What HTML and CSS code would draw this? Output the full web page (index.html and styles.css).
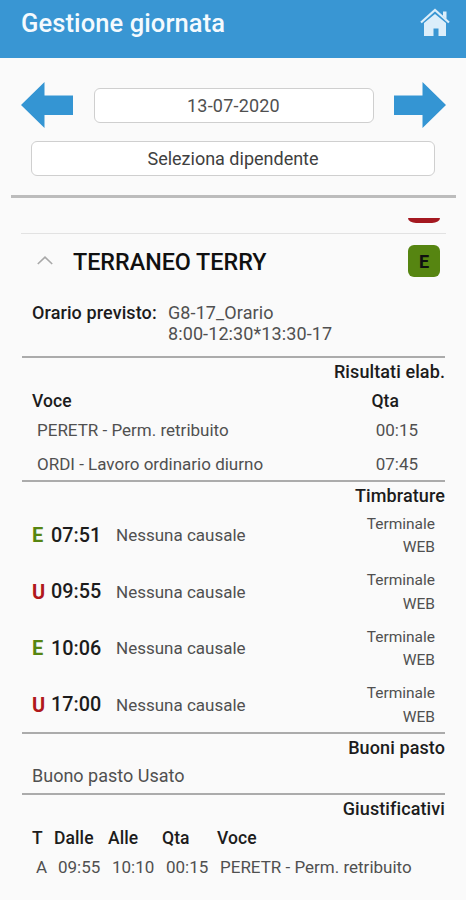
FILE: index.html
```html
<!DOCTYPE html>
<html lang="it">

<head>
  <meta charset="UTF-8">
  <meta name="viewport" content="width=device-width, initial-scale=1.0">
  <title>Gestione giornata</title>
  <link rel="stylesheet" href="styles.css">
</head>

<body>
  <header class="header">
    <h1 class="title">Gestione giornata</h1>
    <svg class="home" viewBox="0 0 32 29" width="32" height="29">
      <path class="home-body" d="M5 15 L16 6 L27 15 V28 H19.5 V20.5 H14.5 V28 H5 Z" />
      <path class="home-roof" d="M2 14.5 L16 2 L30 14.5" />
      <path class="home-body" d="M24 3.5 H27.5 V11 L24 8 Z" />
    </svg>
  </header>

  <div class="day-nav">
    <svg class="arrow" viewBox="0 0 52 46" width="52" height="46">
      <path d="M0 23 L23.5 0 V13.5 H52 V33 H23.5 V46 Z" />
    </svg>
    <div class="box date">13-07-2020</div>
    <svg class="arrow" viewBox="0 0 52 46" width="52" height="46">
      <path d="M52 23 L28.5 0 V13.5 H0 V33 H28.5 V46 Z" />
    </svg>
  </div>
  <div class="box employee">Seleziona dipendente</div>

  <main class="list">
    <div class="previous">
      <span class="badge-cut"></span>
    </div>
    <div class="person">
      <svg class="chevron" viewBox="0 0 16 9" width="16" height="9">
        <path d="M0.8 8 L8 1.2 L15.2 8" />
      </svg>
      <h2 class="name">TERRANEO TERRY</h2>
      <span class="badge">E</span>
    </div>

    <section class="schedule">
      <span class="label">Orario previsto:</span>
      <span class="hours">G8-17_Orario<br>8:00-12:30*13:30-17</span>
    </section>

    <section class="results">
      <h3>Risultati elab.</h3>
      <div class="result head"><span>Voce</span><span>Qta</span></div>
      <div class="result"><span>PERETR - Perm. retribuito</span><span>00:15</span></div>
      <div class="result"><span>ORDI - Lavoro ordinario diurno</span><span>07:45</span></div>
    </section>

    <section class="stamps">
      <h3>Timbrature</h3>
      <div class="stamp">
        <span class="dir in">E</span><span class="time">07:51</span>
        <span class="reason">Nessuna causale</span>
        <span class="source">Terminale<br>WEB</span>
      </div>
      <div class="stamp">
        <span class="dir out">U</span><span class="time">09:55</span>
        <span class="reason">Nessuna causale</span>
        <span class="source">Terminale<br>WEB</span>
      </div>
      <div class="stamp">
        <span class="dir in">E</span><span class="time">10:06</span>
        <span class="reason">Nessuna causale</span>
        <span class="source">Terminale<br>WEB</span>
      </div>
      <div class="stamp">
        <span class="dir out">U</span><span class="time">17:00</span>
        <span class="reason">Nessuna causale</span>
        <span class="source">Terminale<br>WEB</span>
      </div>
    </section>

    <section class="meals">
      <h3>Buoni pasto</h3>
      <p class="meal">Buono pasto Usato</p>
    </section>

    <section class="absences">
      <h3>Giustificativi</h3>
      <div class="absence head">
        <span>T</span><span>Dalle</span><span>Alle</span><span>Qta</span><span>Voce</span>
      </div>
      <div class="absence">
        <span>A</span><span>09:55</span><span>10:10</span><span>00:15</span><span>PERETR - Perm. retribuito</span>
      </div>
    </section>
  </main>
</body>

</html>
```
FILE: styles.css
```css
* {
  box-sizing: border-box;
}

body {
  margin: 0;
  height: 900px;
  overflow: hidden;
  background-color: #fafafa;
  color: #505050;
  font-family: Roboto, "Liberation Sans", sans-serif;
  font-size: 18px;
  white-space: nowrap;
}

h1, h2, h3, p {
  margin: 0;
}

.header {
  display: flex;
  justify-content: space-between;
  height: 58px;
  padding: 8px 15px 0 21px;
  background-color: #3996d3;
}

.title {
  color: #f4fafe;
  font-size: 25.5px;
  font-weight: 500;
  line-height: 31px;
  letter-spacing: 0.1px;
}

.home-body {
  fill: #dceefa;
}

.home-roof {
  fill: none;
  stroke: #dceefa;
  stroke-width: 2.2;
}

.day-nav {
  display: flex;
  align-items: center;
  justify-content: space-between;
  height: 46px;
  margin: 24px 20px 0 21px;
}

.arrow {
  fill: #3495d3;
}

.box {
  height: 35px;
  border: 1px solid #cfcfcf;
  border-radius: 6px;
  background-color: #fff;
  line-height: 34px;
  text-align: center;
}

.date {
  width: 280px;
  letter-spacing: 0.2px;
}

.employee {
  margin: 13px 31px 0;
  color: #404040;
}

.list {
  margin: 19px 10px 0 11px;
  padding: 0 10px;
  border-top: 3px solid #bcbcbc;
}

.previous {
  display: flex;
  justify-content: flex-end;
  height: 36px;
  padding: 20px 6px 0 0;
  border-bottom: 1px solid #e2e2e2;
}

.badge-cut {
  width: 32px;
  height: 5px;
  border-radius: 0 0 8px 8px / 0 0 5px 5px;
  background-color: #a41820;
}

.person {
  display: flex;
  align-items: center;
  height: 56px;
  padding: 0 6px 0 16px;
}

.chevron {
  margin-top: -4px;
  fill: none;
  stroke: #a8a8a8;
  stroke-width: 1.6;
}

.name {
  flex: 1;
  padding-left: 20px;
  color: #101010;
  font-size: 23.3px;
  font-weight: 500;
}

.badge {
  width: 32px;
  height: 32px;
  margin-top: -2px;
  border-radius: 6px;
  background-color: #568511;
  color: #101010;
  font-weight: 700;
  line-height: 34px;
  text-align: center;
}

section {
  margin: 0 1px;
  border-bottom: 2px solid #ababab;
}

h3 {
  height: 26px;
  color: #1c1c1c;
  font-size: 18px;
  font-weight: 500;
  line-height: 27px;
  letter-spacing: 0.1px;
  text-align: right;
}

.schedule {
  display: flex;
  height: 68px;
  padding: 12px 0 0 10px;
  line-height: 21px;
  letter-spacing: 0.1px;
}

.schedule .label {
  width: 136px;
  color: #1c1c1c;
  font-weight: 500;
}

.results {
  height: 124px;
}

.result {
  display: flex;
  justify-content: space-between;
  height: 34px;
  padding: 0 27px 0 15px;
  font-size: 17px;
  line-height: 35px;
}

.absence.head,
.result.head {
  color: #1c1c1c;
  font-size: 17.5px;
  font-weight: 500;
  letter-spacing: 0.1px;
}

.result.head {
  height: 29px;
  padding: 0 46px 0 10px;
}

.stamps {
  height: 252px;
}

.stamp {
  display: flex;
  align-items: center;
  height: 56.5px;
  padding: 0 10px;
}

.dir,
.time,
.reason {
  margin-top: -2px;
}

.dir {
  width: 19px;
  font-size: 20px;
  font-weight: 700;
}

.in {
  color: #568511;
}

.out {
  color: #b0181c;
}

.time {
  width: 65px;
  color: #1c1c1c;
  font-size: 19.8px;
  font-weight: 500;
}

.reason {
  flex: 1;
  font-size: 17px;
}

.source {
  font-size: 15.5px;
  line-height: 23.5px;
  text-align: right;
}

.meals {
  height: 61px;
}

.meal {
  padding-left: 10px;
  line-height: 32px;
}

.absences {
  border-bottom: 0;
}

.absence {
  display: grid;
  grid-template-columns: 22px 54px 54px 54px 1fr;
  padding-left: 14px;
  font-size: 17px;
  line-height: 24px;
}

.absence.head {
  grid-template-columns: 22px 54px 54px 55px 1fr;
  padding: 3px 0 2px 10px;
  line-height: 29px;
}
```
